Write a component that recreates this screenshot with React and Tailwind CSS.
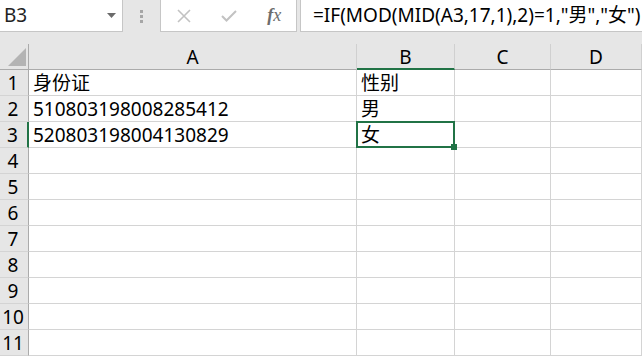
import React from 'react'

const font = { fontFamily: '"Noto Sans", "Noto Sans CJK SC", sans-serif' }

const rows = [
  ['身份证', '性别'],
  ['510803198008285412', '男'],
  ['520803198004130829', '女'],
]

function Cell({ children, selected, className = '' }) {
  return (
    <div className={`relative h-[26px] border-r border-b border-[#d4d4d4] pl-[4px] text-[19px] leading-[26px] text-black whitespace-nowrap ${selected ? 'z-10' : ''} ${className}`}>
      {children}
      {selected && (
        <div className="absolute left-[-1px] top-[-1px] right-[-1px] bottom-[-1px] border-2 border-[#217346]">
          <div className="absolute right-[-4px] bottom-[-4px] w-[6px] h-[6px] bg-[#217346]" />
        </div>
      )}
    </div>
  )
}

export default function App() {
  return (
    <div className="w-[642px] h-[357px] overflow-hidden bg-white select-none" style={font}>
      {/* formula bar */}
      <div className="h-[44px] bg-[#e6e6e6] flex items-start">
        <div className="w-[123px] h-[32px] bg-white border-r border-b border-[#c6c6c6] flex items-center justify-between pl-[4px] pr-[6px]">
          <span className="text-[19px] text-[#222]">B3</span>
          <svg width="9" height="5" viewBox="0 0 9 5"><path d="M0 0h9L4.5 5z" fill="#6b6b6b" /></svg>
        </div>
        <div className="w-[37px] h-[32px] flex flex-col items-center justify-center gap-[2px]">
          <div className="w-[3px] h-[3px] bg-[#a6a6a6]" />
          <div className="w-[3px] h-[3px] bg-[#a6a6a6]" />
          <div className="w-[3px] h-[3px] bg-[#a6a6a6]" />
        </div>
        <div className="w-[137px] h-[32px] bg-white border-x border-b border-[#c6c6c6] flex items-center">
          <div className="w-[46px] flex justify-center">
            <svg width="14" height="14" viewBox="0 0 14 14"><path d="M1 1l12 12M13 1L1 13" stroke="#c2c2c2" strokeWidth="1.6" /></svg>
          </div>
          <div className="w-[46px] flex justify-center">
            <svg width="16" height="12" viewBox="0 0 16 12"><path d="M1 6l4.5 4.5L15 1" stroke="#c2c2c2" strokeWidth="2" fill="none" /></svg>
          </div>
          <div className="w-[44px] flex justify-center">
            <span className="text-[18px] italic text-[#6d6d6d]" style={{ fontFamily: '"Liberation Serif", serif' }}>
              <span className="font-semibold">f</span>x
            </span>
          </div>
        </div>
        <div className="ml-[3px] flex-1 h-[32px] bg-white border-l border-b border-[#c6c6c6] pl-[12px] flex items-center whitespace-nowrap overflow-hidden">
          <span className="text-[19px] text-black">=IF(MOD(MID(A3,17,1),2)=1,"男","女")</span>
        </div>
      </div>

      {/* sheet */}
      <div className="grid grid-cols-[29px_328px_98px_96px_1fr]">
        {/* header */}
        <div className="h-[26px] bg-[#e6e6e6] border-r border-b border-[#ababab] relative">
          <svg className="absolute left-[8px] bottom-[3px]" width="18" height="18" viewBox="0 0 18 18"><path d="M18 0v18H0z" fill="#b4b4b4" /></svg>
        </div>
        {['A', 'B', 'C', 'D'].map(c => (
          <div
            key={c}
            className={`h-[26px] bg-[#e6e6e6] border-r border-[#d0d0d0] text-center text-[19px] leading-[26px] text-black ${c === 'B' ? 'border-b-2 border-b-[#217346]' : 'border-b border-b-[#ababab]'}`}
          >
            {c}
          </div>
        ))}

        {Array.from({ length: 11 }, (_, i) => {
          const r = rows[i] || ['', '']
          return (
            <React.Fragment key={i}>
              <div className={`h-[26px] bg-[#e6e6e6] border-b border-[#d4d4d4] text-center pr-[2px] text-[19px] leading-[26px] text-black ${i === 2 ? 'border-r-2 border-r-[#217346]' : 'border-r border-r-[#ababab]'}`}>
                {i + 1}
              </div>
              <Cell>{r[0]}</Cell>
              <Cell selected={i === 2}>{r[1]}</Cell>
              <Cell />
              <Cell />
            </React.Fragment>
          )
        })}
      </div>
    </div>
  )
}
